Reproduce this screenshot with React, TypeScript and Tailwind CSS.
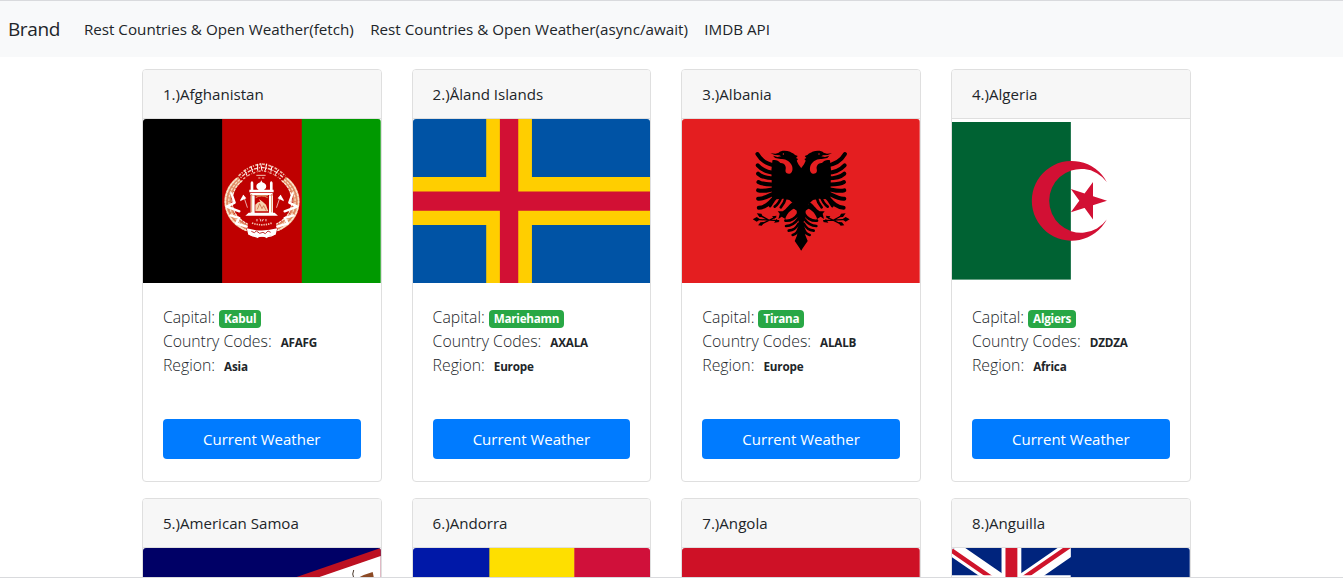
import type { ReactNode } from "react";

type Country = {
  name: string;
  flag: ReactNode;
  details?: { capital: string; codes: string; region: string };
};

function Flag({ children }: { children: ReactNode }) {
  return (
    <svg
      viewBox="0 0 238 164"
      preserveAspectRatio="none"
      className="block h-[164px] w-full rounded-t-[3px]"
      aria-hidden="true"
    >
      {children}
    </svg>
  );
}

function WreathHalf() {
  return (
    <g fill="none" strokeLinecap="round">
      <path d="M94 88C64 108 50 142 60 176C68 206 86 222 114 234" stroke="#e08a62" strokeWidth="20" strokeLinecap="butt" />
      <path d="M84 86C58 108 44 142 53 176C61 206 82 226 112 241" stroke="#fbe6cf" strokeWidth="5" strokeDasharray="6 5" />
      <path d="M92 90C66 112 55 142 63 173C70 200 87 217 113 230" stroke="#f9dcc0" strokeWidth="4" strokeDasharray="5 6" />
      <path d="M100 92C76 112 66 140 72 170C78 196 94 210 116 222" stroke="#fbe6cf" strokeWidth="4" strokeDasharray="6 5" />
      <path d="M68 130L78 158L54 170L92 184M66 196L92 204L82 220L114 230" stroke="#fff" strokeWidth="7" strokeLinejoin="round" />
      <path d="M104 136L116 172" stroke="#fff" strokeWidth="2" />
      <path d="M104 134L113 145L94 154L96 148Z" fill="#fff" />
    </g>
  );
}

function AfghanistanFlag() {
  return (
    <Flag>
      <rect width="80" height="164" fill="#000" />
      <rect x="79.3" width="80" height="164" fill="#bf0000" />
      <rect x="159" width="79" height="164" fill="#009900" />
      <g transform="translate(65.8 31) scale(.3333)">
        <WreathHalf />
        <g transform="translate(320 0) scale(-1 1)">
          <WreathHalf />
        </g>
        <path d="M90 78Q120 46 160 42Q200 46 230 78" fill="none" stroke="#f0b9a4" strokeWidth="5" strokeDasharray="9 3 4 4" />
        <path d="M96 83Q124 56 160 52Q196 56 224 83" fill="none" stroke="#f6d0c2" strokeWidth="4" strokeDasharray="3 3 11 4" />
        <path d="M104 87Q130 66 160 62Q190 66 216 87" fill="none" stroke="#f0b9a4" strokeWidth="4" strokeDasharray="7 5 2 3" />
        <path d="M108 62l8 16M127 49l5 18M147 42v20M156 40l4 22M174 41l-4 20M190 48l-3 17M209 60l-9 14" stroke="#fff" strokeWidth="3" />
        <path d="M143 76h28M149 84h6m5 0h7" stroke="#f3c3b0" strokeWidth="3" fill="none" />
        <path d="M158 91l3 6c10 4 14 9 11 17l-6 6h-16l-6-6c-3-8 1-13 11-17Z" fill="#fff" />
        <path d="M126 98q4-8 8 0v22h-8zM184 98q4-8 8 0v22h-8zM122 119h73v8h-73zM125 129h67v6h-67zM126 136h12v52h-12zM181 136h12v52h-12zM120 188h78l10 9H110z" fill="#fff" />
        <path d="M129 132v55M189 132v55M140 137h38M141 143q18-11 36 0" stroke="#e09b68" strokeWidth="3" fill="none" />
        <path d="M140 184V164l8-7 7-2-4-8 11 8 10 9 7 20Z" fill="#f6d2ae" />
        <path d="M146 178l7-17 7 15 5-9 8 15" stroke="#c85530" strokeWidth="2" fill="none" />
        <path d="M145 207v7M153 207q5 1 3 7M164 207l-3 7M172 207v7" stroke="#fff" strokeWidth="2.5" fill="none" />
        <path d="M130 219q30 11 60 0" fill="none" stroke="#f5c6b2" strokeWidth="5" strokeDasharray="4 3" />
        <path d="M114 235q46 13 92 0l-5 19q-41 11-82 0Z" fill="#fff" />
        <path d="M128 244l9 4 6-5 10 7 10-3 7 4 8-8 8 4" fill="none" stroke="#bf3030" strokeWidth="3" />
        <path d="M122 253q14 9 30 6m16 0q18 3 30-6M144 263q16-9 32 0" fill="none" stroke="#fff" strokeWidth="3.5" />
      </g>
    </Flag>
  );
}

function AlandFlag() {
  return (
    <Flag>
      <rect width="238" height="164" fill="#0053a5" />
      <path d="M73.3 0h45.8v164H73.3zM0 57.9h238v48.2H0z" fill="#ffce00" />
      <path d="M87 0h18.4v164H87zM0 72.4h238v19.3H0z" fill="#d21034" />
    </Flag>
  );
}

function EagleHalf() {
  return (
    <g>
      <path d="M215 86L205 73L200 62L204 57L198 54L203 48L195 45C190 38 184 39 180 35C168 31 152 31 146 38L136 41L121 40L134 45L148 46L153 49L142 51L129 47L135 54L152 57C166 55 181 64 186 78C189 89 187 100 178 101C167 102 165 94 167 87C169 77 161 68 151 69C145 62 136 58 127 61L124 90L126 174L135 178L160 176L178 180L192 193L190 205L200 212L201 230L206 245L201 286L194 303L213 331L215 331Z" />
      <circle cx="160" cy="42" r="2.2" fill="#e41e20" />
      <path d="M140 77C112 74 94 63 82 42M136 98C112 98 96 90 83 76M134 115C112 115 96 112 84 101M136 133C112 134 98 134 85 126M138 146C112 151 100 156 84 151M140 156C114 168 102 178 84 176M142 164C122 184 110 203 86 203" fill="none" stroke="#000" strokeWidth="12" strokeLinecap="round" />
      <path d="M142 168Q130 180 120 198M154 170Q148 190 134 200M168 170Q164 188 152 202" fill="none" stroke="#000" strokeWidth="8" strokeLinecap="round" />
      <path d="M190 187C178 190 170 208 158 214L143 214L149 221L145 237L155 230L166 237C168 224 182 208 196 204Z" />
      <path d="M76 238L146 242M88 225L116 240M92 253L137 231" fill="none" stroke="#000" strokeWidth="4" strokeLinecap="round" />
      <path d="M68 238l12-7 10 7-10 7zM80 220l14 1 5 11-11-1zM84 256l7-9 12-1-8 11zM126 229l14-2-8 10zM132 248l16-2-9-9z" />
      <path d="M204 222Q190 244 166 242M204 237Q190 257 168 258M205 252Q196 270 176 272M206 266Q201 282 188 285" fill="none" stroke="#000" strokeWidth="8" strokeLinecap="round" />
    </g>
  );
}

function AlbaniaFlag() {
  return (
    <Flag>
      <rect width="238" height="164" fill="#e41e20" />
      <g transform="translate(48.2 21) scale(.3333)">
        <EagleHalf />
        <g transform="translate(427 0) scale(-1 1)">
          <EagleHalf />
        </g>
      </g>
    </Flag>
  );
}

function AlgeriaFlag() {
  return (
    <Flag>
      <rect width="238" height="164" fill="#fff" />
      <rect y="3" width="119" height="157.6" fill="#006233" />
      <path
        d="M155 63A39.9 39.9 0 1 0 155 100.6A31.9 31.9 0 1 1 155 63ZM155.2 81.8L119 70.1L141.2 100.4V62.9L119 93.2Z"
        fill="#d21034"
      />
    </Flag>
  );
}

function AmericanSamoaFlag() {
  return (
    <Flag>
      <rect width="238" height="164" fill="#000066" />
      <path d="M0 82L238 0V164Z" fill="#bd1021" />
      <path d="M22 82L238 8V156Z" fill="#fff" />
      <path d="M211 22l-1 4 1 4" fill="none" stroke="#473629" strokeWidth="1" />
      <path d="M215 30l6-3 9-3 1 5-6 1z" fill="#8c4a25" />
    </Flag>
  );
}

function AndorraFlag() {
  return (
    <Flag>
      <rect width="77" height="164" fill="#0018a8" />
      <rect x="76.5" width="85.5" height="164" fill="#fedf00" />
      <rect x="161.5" width="76.5" height="164" fill="#d0103a" />
    </Flag>
  );
}

function AngolaFlag() {
  return (
    <Flag>
      <rect width="238" height="82" fill="#ce1126" />
      <rect y="82" width="238" height="82" fill="#000" />
    </Flag>
  );
}

function AnguillaFlag() {
  return (
    <Flag>
      <rect width="238" height="164" fill="#00247d" />
      <svg width="119" height="82" viewBox="0 0 60 30" preserveAspectRatio="none">
        <path d="M0 0L60 30M60 0L0 30" stroke="#fff" strokeWidth="6" />
        <path d="M0 0L30 15H26L0 2ZM60 0L30 15H26L56 0ZM60 30L30 15H34L60 28ZM0 30L30 15H34L4 30Z" fill="#cf142b" />
        <path d="M30 0V30M0 15H60" stroke="#fff" strokeWidth="10" />
        <path d="M30 0V30M0 15H60" stroke="#cf142b" strokeWidth="6" />
      </svg>
    </Flag>
  );
}

const countries: Country[] = [
  { name: "Afghanistan", flag: <AfghanistanFlag />, details: { capital: "Kabul", codes: "AFAFG", region: "Asia" } },
  { name: "Åland Islands", flag: <AlandFlag />, details: { capital: "Mariehamn", codes: "AXALA", region: "Europe" } },
  { name: "Albania", flag: <AlbaniaFlag />, details: { capital: "Tirana", codes: "ALALB", region: "Europe" } },
  { name: "Algeria", flag: <AlgeriaFlag />, details: { capital: "Algiers", codes: "DZDZA", region: "Africa" } },
  { name: "American Samoa", flag: <AmericanSamoaFlag /> },
  { name: "Andorra", flag: <AndorraFlag /> },
  { name: "Angola", flag: <AngolaFlag /> },
  { name: "Anguilla", flag: <AnguillaFlag /> },
];

function CountryCard({ country, index }: { country: Country; index: number }) {
  const { name, flag, details } = country;
  return (
    <article className="h-[413px] rounded border border-[#dfdfdf] bg-white">
      <h2 className="h-[49px] rounded-t-[3px] border-b border-[#dfdfdf] bg-[#f7f7f7] px-5 py-3 text-[15.1px] leading-6">
        {index + 1}.){name}
      </h2>
      {flag}
      {details && (
        <div className="px-5 pt-[22px]">
          <div className="text-[15.8px] font-[330] leading-6">
            <p className="flex h-6 items-center">
              Capital:
              <span className="ml-1 mt-[3px] flex h-[18px] items-center rounded bg-[#28a745] px-[5px] text-[11.7px] font-bold leading-none tracking-[-0.25px] text-white">
                {details.capital}
              </span>
            </p>
            <p className="flex h-6 items-center">
              Country Codes:
              <span className="ml-[9px] mt-[3px] text-[11.7px] font-bold leading-none tracking-[-0.2px]">{details.codes}</span>
            </p>
            <p className="flex h-6 items-center">
              Region:
              <span className="ml-[9px] mt-[3px] text-[11.7px] font-bold leading-none tracking-[-0.2px]">{details.region}</span>
            </p>
          </div>
          <button className="mt-[42px] block h-10 w-full rounded bg-[#007bff] text-[15px] text-white">
            Current Weather
          </button>
        </div>
      )}
    </article>
  );
}

export default function App() {
  return (
    <div className="h-[578px] overflow-hidden border-y border-[#d9dadd] bg-white font-['Open_Sans','Noto_Sans',sans-serif] text-[#212529]">
      <nav className="flex h-14 items-center bg-[#f8f9fa] px-2">
        <a className="mr-6 text-[19px] leading-none tracking-[-0.4px]">Brand</a>
        <div className="flex gap-[16.4px] pb-px text-[15.2px] leading-6">
          <a>Rest Countries &amp; Open Weather(fetch)</a>
          <a>Rest Countries &amp; Open Weather(async/await)</a>
          <a>IMDB API</a>
        </div>
      </nav>
      <main className="ml-[141.9px] mt-3 grid w-[1048.75px] grid-cols-4 gap-x-[30px] gap-y-4">
        {countries.map((country, index) => (
          <CountryCard key={country.name} country={country} index={index} />
        ))}
      </main>
    </div>
  );
}
